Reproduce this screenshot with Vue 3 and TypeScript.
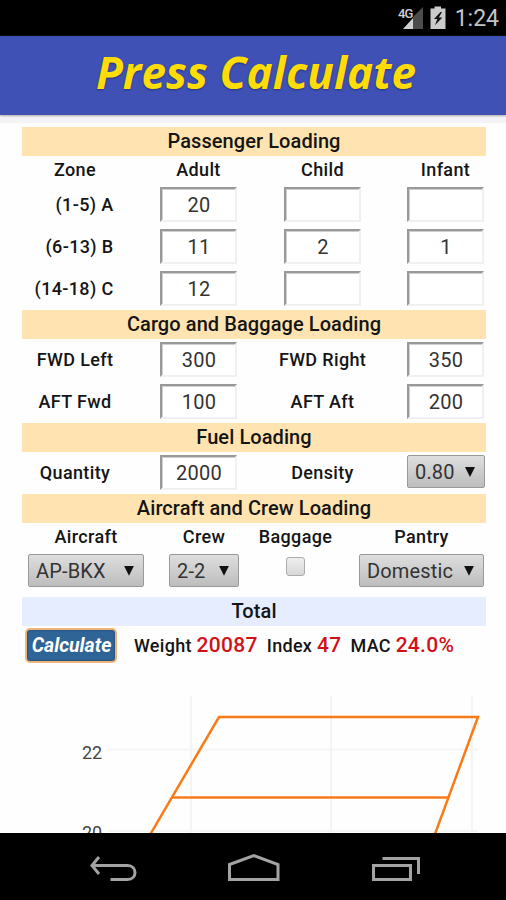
<script setup lang="ts">
import { ref } from 'vue'

interface Field {
  label: string
  value: string
}

const heads = ['Zone', 'Adult', 'Child', 'Infant']
const zones = ref([
  { label: '(1-5) A', seats: ['20', '', ''] },
  { label: '(6-13) B', seats: ['11', '2', '1'] },
  { label: '(14-18) C', seats: ['12', '', ''] },
])
const cargo = ref<Field[][]>([
  [
    { label: 'FWD Left', value: '300' },
    { label: 'FWD Right', value: '350' },
  ],
  [
    { label: 'AFT Fwd', value: '100' },
    { label: 'AFT Aft', value: '200' },
  ],
])
const fuel = ref('2000')
const baggage = ref(false)
const totals: Field[] = [
  { label: 'Weight', value: '20087' },
  { label: 'Index', value: '47' },
  { label: 'MAC', value: '24.0%' },
]
</script>

<template>
  <div class="screen">
    <div class="status">
      <svg class="signal" width="26" height="24" viewBox="0 0 26 24">
        <path d="M25 1V23H15V11Z" fill="#4c4c4c" />
        <path d="M15 12V23H5Z" fill="#d0d0d0" />
        <text x="0" y="12" class="net">4G</text>
      </svg>
      <svg class="battery" width="16" height="24" viewBox="0 0 16 24">
        <path d="M4.5 0.5H11V2.5H15.5V23H0.5V2.5H4.5Z" fill="#cbcbcb" />
        <path d="M10.5 6L4 13H7.3L5 19.2L12.3 11.4H8.8L12 6Z" fill="#111" />
      </svg>
      <span class="clock">1:24</span>
    </div>

    <header class="title"><h1>Press Calculate</h1></header>

    <main class="content">
      <h2 class="bar">Passenger Loading</h2>
      <div class="row heads">
        <span v-for="h in heads" :key="h" class="label">{{ h }}</span>
      </div>
      <div v-for="z in zones" :key="z.label" class="row fields">
        <span class="label zone">{{ z.label }}</span>
        <input v-for="(s, i) in z.seats" :key="i" v-model="z.seats[i]" type="text" />
      </div>

      <h2 class="bar after">Cargo and Baggage Loading</h2>
      <div v-for="(r, i) in cargo" :key="i" class="row fields">
        <template v-for="f in r" :key="f.label">
          <span class="label">{{ f.label }}</span>
          <input v-model="f.value" type="text" />
        </template>
      </div>

      <h2 class="bar after">Fuel Loading</h2>
      <div class="row fields">
        <span class="label">Quantity</span>
        <input v-model="fuel" type="text" />
        <span class="label">Density</span>
        <button class="select density"><span>0.80</span><i></i></button>
      </div>

      <h2 class="bar after crewbar">Aircraft and Crew Loading</h2>
      <div class="crew">
        <span class="label">Aircraft</span>
        <span class="label">Crew</span>
        <span class="label">Baggage</span>
        <span class="label pantry">Pantry</span>
        <button class="select aircraft"><span>AP-BKX</span><i></i></button>
        <button class="select seats"><span>2-2</span><i></i></button>
        <input v-model="baggage" type="checkbox" class="check" />
        <button class="select domestic"><span>Domestic</span><i></i></button>
      </div>

      <h2 class="bar total">Total</h2>
      <div class="result">
        <button class="calc">Calculate</button>
        <p v-for="t in totals" :key="t.label">
          {{ t.label }} <b>{{ t.value }}</b>
        </p>
      </div>
    </main>

    <svg class="chart" width="506" height="163" viewBox="0 670 506 163">
      <g stroke="#f2f2f2" stroke-width="1.6">
        <path d="M191 696V833M331 696V833M472 696V833M108 749.5H478M108 831H478" />
      </g>
      <g fill="none" stroke="#f97b17" stroke-width="2.5">
        <path d="M150.500 834L219 717H478L435 834" />
        <path d="M172.500 797.500H448" />
      </g>
      <text x="82" y="758.500" class="tick">22</text>
      <text x="82" y="839" class="tick">20</text>
    </svg>

    <nav class="nav">
      <svg width="506" height="67" viewBox="0 833 506 67" fill="none" stroke="#a3a3a3" stroke-width="3">
        <path d="M99 857L92 865.500L99 874M92 865.500H127.500C137.500 865.500 137.500 879.500 127.500 879.500H110.500" />
        <path d="M229.500 864.500L253.800 855.500L278 864.500V879.500H229.500Z" />
        <path d="M373.500 865.500H410.500V879.500H373.500ZM382.500 858.500H418.500V874" />
      </svg>
    </nav>
  </div>
</template>

<style>
body {
  margin: 0;
  background: #fff;
}
</style>

<style scoped>
.screen {
  width: 506px;
  height: 900px;
  overflow: hidden;
  display: flex;
  flex-direction: column;
  font-family: Roboto, 'Liberation Sans', sans-serif;
  background: #fefefe;
  color: #151515;
}
.status {
  height: 36px;
  flex: none;
  box-sizing: border-box;
  padding: 0 7px 1px 0;
  background: #000;
  display: flex;
  align-items: center;
  justify-content: flex-end;
}
.signal {
  margin-right: 6px;
}
.net {
  font-size: 13px;
  font-weight: 500;
  letter-spacing: -1px;
  fill: #d0d0d0;
}
.battery {
  margin-right: 9px;
}
.clock {
  font-size: 23px;
  line-height: 34px;
  margin-top: 3px;
  color: #c4c4c4;
}
.title {
  height: 79px;
  flex: none;
  background: #3f51b5;
  box-shadow: 0 1px 2px #aaa, 0 8px 1px #f4f4f6;
  text-align: center;
}
h1 {
  margin: 0;
  padding-left: 6px;
  font: italic 700 44px/72px 'Open Sans', sans-serif;
  letter-spacing: 0.1px;
  color: #ffdc05;
  text-shadow: 0 1px 2px #253574;
  white-space: nowrap;
}
.content {
  width: 464px;
  height: 543px;
  flex: none;
  padding: 12px 20px 0 22px;
}
.bar {
  margin: 0;
  height: 29px;
  font-size: 20px;
  line-height: 29px;
  font-weight: 500;
  text-align: center;
  background: #ffe4b1;
  letter-spacing: 0.08px;
}
.bar.after {
  margin-top: -2.800px;
  margin-bottom: 3.500px;
}
.row {
  display: grid;
  grid-template-columns: 138px 124px 123px 79px;
}
.label {
  font-size: 18px;
  line-height: 22px;
  font-weight: 500;
  letter-spacing: 0.35px;
  text-align: center;
  white-space: nowrap;
}
.row .label {
  width: 77px;
  display: flex;
  justify-content: center;
}
.row .label:first-child {
  width: 106px;
}
.row .label.zone {
  width: 91.500px;
  justify-content: flex-end;
}
.heads {
  padding: 3px 0 6px;
}
.fields {
  height: 41.800px;
}
.fields .label {
  line-height: 36px;
}
.fields input {
  box-sizing: border-box;
  width: 77px;
  height: 35px;
  margin: 0;
  padding: 1px 0 0 1px;
  border: 2px solid #f0f0f0;
  border-top-color: #999;
  border-left-color: #999;
  box-shadow: inset 1px 1px 0 #cfcfcf;
  background: #fff;
  font: 20px Roboto, sans-serif;
  letter-spacing: 0.2px;
  color: #333;
  text-align: center;
  outline: none;
}
.select {
  box-sizing: border-box;
  height: 33px;
  margin: 0;
  padding: 0 9px 0 7px;
  display: flex;
  align-items: center;
  justify-content: space-between;
  border: 1.500px solid #999;
  border-radius: 2px;
  background: linear-gradient(#dedede, #bdbdbd);
  font: 20px Roboto, sans-serif;
  letter-spacing: 0.15px;
  color: #333;
}
.select i {
  width: 10px;
  height: 10px;
  background: #111;
  clip-path: polygon(0 0, 100% 0, 50% 100%);
}
.density {
  width: 78px;
}
.crew {
  height: 71px;
  display: grid;
  grid-template-columns: 128px 108px 75px 153px;
  grid-template-rows: 28px 43px;
  justify-items: center;
}
.crewbar.after {
  margin-top: -3px;
  margin-bottom: 3px;
}
.pantry,
.domestic {
  position: relative;
  left: 12px;
}
.aircraft {
  width: 116px;
}
.seats {
  width: 70px;
}
.domestic {
  width: 125px;
}
.check {
  appearance: none;
  box-sizing: border-box;
  width: 19px;
  height: 19px;
  margin: 3px 0 0;
  border: 1.500px solid #aaa;
  border-radius: 3px;
  background: linear-gradient(#eee, #d8d8d8);
}
.total {
  background: #e5edff;
}
.result {
  display: flex;
  align-items: flex-start;
  padding: 2px 0 0 3px;
}
.calc {
  box-sizing: border-box;
  width: 92px;
  height: 35px;
  margin: 0 17px 0 0;
  padding: 0 0 0 1px;
  border: 2px solid #efb477;
  border-radius: 5px;
  background: #2e6496;
  box-shadow: inset 0 0 1px 1px #265480;
  color: #fff;
  font: italic 700 19.500px Roboto, sans-serif;
}
.result p {
  margin: 0 9px 0 0;
  font-size: 18px;
  line-height: 34px;
  font-weight: 500;
  letter-spacing: 0.3px;
  white-space: nowrap;
}
.result b {
  font-size: 21px;
  font-weight: 500;
  color: #d01218;
}
.chart {
  flex: none;
  display: block;
}
.tick {
  font-size: 18px;
  fill: #444;
}
.nav {
  height: 67px;
  flex: none;
  background: #000;
}
</style>
